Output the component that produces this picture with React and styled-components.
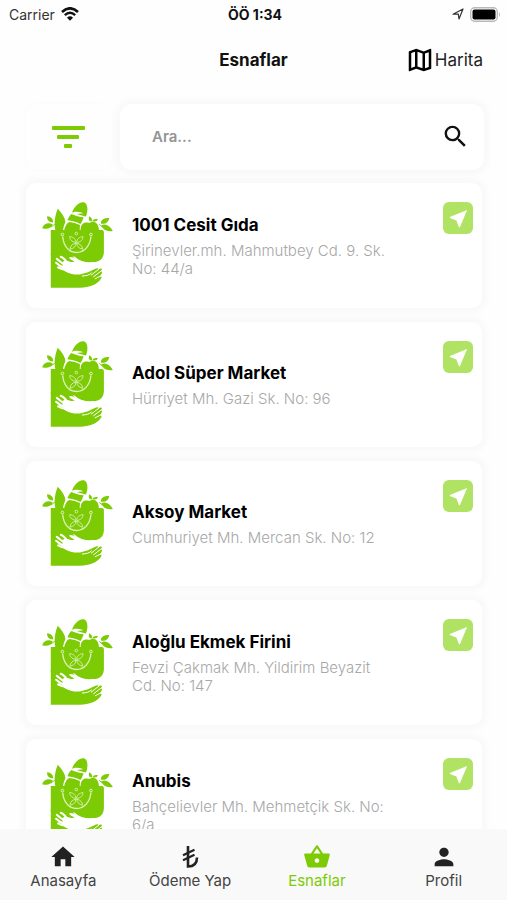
import { useState } from "react"
import styled, { createGlobalStyle } from "styled-components"
import { MdHome, MdPerson, MdShoppingBasket, MdSearch, MdNearMe, MdOutlineMap } from "react-icons/md"

const shops = [
    { name: "1001 Cesit Gıda", address: "Şirinevler.mh. Mahmutbey Cd. 9. Sk. No: 44/a" },
    { name: "Adol Süper Market", address: "Hürriyet Mh. Gazi Sk. No: 96" },
    { name: "Aksoy Market", address: "Cumhuriyet Mh. Mercan Sk. No: 12" },
    { name: "Aloğlu Ekmek Firini", address: "Fevzi Çakmak Mh. Yildirim Beyazit Cd. No: 147" },
    { name: "Anubis", address: "Bahçelievler Mh. Mehmetçik Sk. No: 6/a" },
]

const tabs = [
    { label: "Anasayfa", icon: <MdHome size={28} /> },
    { label: "Ödeme Yap", icon: <LiraIcon /> },
    { label: "Esnaflar", icon: <MdShoppingBasket size={28} /> },
    { label: "Profil", icon: <MdPerson size={30} /> },
]

export default function App() {
    const [search, setSearch] = useState("")
    const [active, setActive] = useState("Esnaflar")

    const filtered = shops.filter((shop) => shop.name.toLowerCase().includes(search.toLowerCase()))

    return (
        <>
            <GlobalStyle />
            <Screen>
                <StatusBar />
                <Header>
                    <h1>Esnaflar</h1>
                    <MapButton type="button">
                        <MdOutlineMap size={30} />
                        Harita
                    </MapButton>
                </Header>
                <SearchRow>
                    <FilterButton type="button" aria-label="Filtrele">
                        <FilterIcon />
                    </FilterButton>
                    <SearchBox>
                        <input
                            type="text"
                            aria-label="Ara"
                            placeholder="Ara..."
                            value={search}
                            onChange={(e) => setSearch(e.target.value)}
                        />
                        <MdSearch size={29} />
                    </SearchBox>
                </SearchRow>
                <List>
                    {filtered.map((shop) => (
                        <Card key={shop.name}>
                            <BagLogo />
                            <CardText>
                                <h2>{shop.name}</h2>
                                <p>{shop.address}</p>
                            </CardText>
                            <LocateButton type="button" aria-label={shop.name}>
                                <MdNearMe size={23} />
                            </LocateButton>
                        </Card>
                    ))}
                </List>
                <TabBar>
                    {tabs.map((tab) => (
                        <Tab
                            key={tab.label}
                            type="button"
                            $active={tab.label === active}
                            onClick={() => setActive(tab.label)}
                        >
                            {tab.icon}
                            <span>{tab.label}</span>
                        </Tab>
                    ))}
                </TabBar>
            </Screen>
        </>
    )
}

function StatusBar() {
    return (
        <Status>
            <StatusSide>
                Carrier
                <svg width="18" height="14" viewBox="0 0 18 14" fill="none" stroke="#111">
                    <path d="M1 5Q9-2.400 17 5" strokeWidth="2.600" />
                    <path d="M3.800 8.100Q9 3.300 14.200 8.100" strokeWidth="2.400" />
                    <path d="M9 13.800L6 10.700Q9 8 12 10.700Z" fill="#111" stroke="none" />
                </svg>
            </StatusSide>
            <strong>ÖÖ 1:34</strong>
            <StatusSide $end>
                <svg width="12" height="12" viewBox="0 0 12 12" fill="none" stroke="#333" strokeWidth="1.200" strokeLinejoin="round">
                    <path d="M1 6.200L11 1L7 11L6.300 6.200Z" />
                </svg>
                <svg width="31" height="15" viewBox="0 0 31 15">
                    <rect x="0.700" y="0.700" width="26.600" height="13.600" rx="4" fill="#fff" stroke="#b9b9b9" strokeWidth="1.400" />
                    <rect x="2.500" y="2.500" width="23" height="10" rx="2" fill="#000" />
                    <path d="M29 5Q31 7.500 29 10Z" fill="#b9b9b9" />
                </svg>
            </StatusSide>
        </Status>
    )
}

function FilterIcon() {
    return (
        <svg width="34" height="22" viewBox="0 0 34 22" fill="currentColor">
            <rect x="0" y="0" width="33" height="4" rx="1" />
            <rect x="5" y="9" width="22" height="4" rx="1" />
            <rect x="12" y="18" width="8" height="4" rx="1" />
        </svg>
    )
}

function LiraIcon() {
    return (
        <svg width="28" height="28" viewBox="0 0 28 28" fill="none" stroke="currentColor" strokeWidth="2.600">
            <path d="M12 3V23.500Q21 23.500 21 14.500" />
            <path d="M7 12.200L18.500 6.700M7 17.200L18.500 11.700" strokeWidth="2.200" />
        </svg>
    )
}

function BagLogo() {
    return (
        <Logo viewBox="36 36 216 262" aria-hidden="true">
            {/* bread, leaves and fruit */}
            <g fill="#7ccb05">
                <path d="M76 122C71 98 75 76 83 56C96 71 106 84 106 97C102 105 100 112 99 122Z" />
                <path d="M102 122C105 108 110 99 118 96C130 97 139 101 150 105L149 122Z" />
                <path d="M112 91C115 83 119 77 124 72C137 78 149 81 161 82C158 91 155 98 151 102C139 96 126 92 112 91Z" />
                <path d="M126 68C133 49 149 34 162 37C174 41 175 62 168 80L164 79L140 72L160 70C153 66 143 65 134 65Z" />
                <path d="M152 122C151 105 160 97 172 98C178 100 182 98 188 95C202 97 207 108 207 122Z" />
                <path d="M183 95C176 92 175 86 178 79C186 84 188 89 185 95ZM188 93C190 88 196 86 204 88C201 94 195 97 188 93Z" />
                <path d="M51 79C63 80 70 87 69 98C57 97 50 91 51 79ZM36 115C41 101 55 96 68 104C64 115 52 119 36 115Z" />
                <path d="M213 101C212 90 221 84 238 84C236 97 226 104 213 101ZM214 106C228 99 240 108 249 123C231 126 219 120 214 106Z" />
            </g>
            <path d="M62 112L74 103M218 112L208 103" stroke="#7ccb05" strokeWidth="3" />
            {/* bag */}
            <path d="M62 120H216Q222 120 222 127V187C221 207 210 216 190 217C169 219 150 215 133 200L62 196Z" fill="#7ccb05" />
            <path d="M62 190V294H150C178 294 204 285 214 266C216 262 214 259 210 261L216 250C217 246 214 244 210 247L216 240C215 235 211 235 206 239L205 236C200 234 192 239 182 244C172 249 160 252 150 254C123 257 104 246 92 230L140 212L120 190Z" fill="#7ccb05" />
            {/* hands */}
            <g fill="none" stroke="#fff" strokeWidth="6" strokeLinecap="round">
                <path d="M92 201C100 204 108 213 114 222M80 207C88 214 96 219 104 226M78 219C85 226 94 231 104 234M84 233C92 238 98 240 106 240" />
            </g>
            <path d="M98 216C106 210 116 214 124 217C131 219 137 219 139 217C131 213 121 211 117 204C121 198 131 203 140 209C163 222 190 224 217 213C206 231 186 237 170 243C154 250 140 253 126 251C110 249 102 244 98 236Z" fill="#fff" />
            <g fill="none" stroke="#fff" strokeWidth="3" strokeLinecap="round">
                <path d="M157 259C168 258 178 257 184 250M184 256L207 238M191 261L212 245M196 267L212 259" />
            </g>
            {/* handle and flower */}
            <g fill="none" stroke="#dff3bb" strokeWidth="4">
                <path d="M98 140C100 169 117 188 139 188C163 188 180 169 183 140" />
                <circle cx="97" cy="134" r="4" strokeWidth="3" />
                <circle cx="183" cy="134" r="4" strokeWidth="3" />
            </g>
            <g fill="none" stroke="#dff3bb" strokeWidth="2.500">
                <path d="M138 158C124 155 119 149 119 140C132 142 137 148 138 158ZM140 158C140 148 147 142 159 140C159 150 153 156 140 158Z" />
                <path d="M138 160C126 162 121 168 120 178C132 176 137 170 138 160ZM140 160C141 170 147 176 158 178C157 168 151 162 140 160Z" />
                <circle cx="139" cy="131" r="4" />
            </g>
        </Logo>
    )
}

const GlobalStyle = createGlobalStyle`
    * {
        box-sizing: border-box;
    }
    body {
        margin: 0;
        background: #fefefe;
        color: #111;
        font-family: Inter, "Liberation Sans", sans-serif;
    }
    h1, h2, p {
        margin: 0;
    }
    button {
        border: none;
        padding: 0;
        background: none;
        color: inherit;
        font-family: inherit;
        cursor: pointer;
    }
`

const Screen = styled.div`
    display: flex;
    flex-direction: column;
    height: 100vh;
    overflow: hidden;
`

const Status = styled.div`
    display: flex;
    align-items: center;
    height: 28px;
    padding: 0 6px 0 9px;
    font-size: 14px;

    strong {
        font-weight: 700;
    }
`

const StatusSide = styled.div`
    flex: 1;
    display: flex;
    align-items: center;
    justify-content: ${(props) => (props.$end ? "flex-end" : "flex-start")};
    gap: 6px;
    color: #333;
`

const Header = styled.header`
    display: grid;
    grid-template-columns: 1fr auto 1fr;
    align-items: center;
    height: 64px;
    padding: 0 24px;

    h1 {
        grid-column: 2;
        font-size: 17px;
        font-weight: 700;
    }
`

const MapButton = styled.button`
    display: flex;
    align-items: center;
    justify-self: end;
    font-size: 17px;
    color: #222;

    svg {
        color: #000;
    }
`

const SearchRow = styled.div`
    display: flex;
    gap: 8px;
    padding: 12px 23px 0 26px;
`

const FilterButton = styled.button`
    display: flex;
    align-items: center;
    justify-content: center;
    width: 86px;
    border-radius: 12px;
    box-shadow: 0 0 6px 2px rgba(0, 0, 0, 0.01);

    svg {
        color: #7ccb05;
    }
`

const SearchBox = styled.label`
    flex: 1;
    display: flex;
    align-items: center;
    height: 66px;
    padding: 0 14px 2px 32px;
    border-radius: 12px;
    background: #fff;
    box-shadow: 0 0 6px 5px rgba(0, 0, 0, 0.024);

    input {
        flex: 1;
        min-width: 0;
        border: none;
        outline: none;
        padding: 0;
        background: none;
        font-family: inherit;
        font-size: 15px;
        font-weight: 600;
    }

    input::placeholder {
        color: #949494;
        opacity: 1;
    }
`

const List = styled.main`
    flex: 1;
    min-height: 0;
    display: flex;
    flex-direction: column;
    gap: 14px;
    padding: 13px 25px 14px 26px;
    overflow-y: auto;
    scrollbar-width: none;
`

const Card = styled.article`
    flex: none;
    display: flex;
    align-items: center;
    min-height: 125px;
    padding: 19px 9px 19px 16px;
    border-radius: 10px;
    background: #fff;
    box-shadow: 0 0 6px 5px rgba(0, 0, 0, 0.024);
`

const Logo = styled.svg`
    flex: none;
    width: 72px;
    height: 87px;
`

const CardText = styled.div`
    flex: 1;
    padding: 0 50px 0 18px;

    h2 {
        margin-bottom: 6px;
        font-size: 17px;
        font-weight: 700;
        line-height: 22px;
        color: #000;
    }

    p {
        font-size: 15px;
        font-weight: 300;
        line-height: 18px;
        color: #a8a8a8;
    }
`

const LocateButton = styled.button`
    align-self: flex-start;
    display: flex;
    align-items: center;
    justify-content: center;
    width: 30px;
    height: 32px;
    border-radius: 6px;
    background: #b0e364;

    svg {
        color: #fff;
    }
`

const TabBar = styled.nav`
    flex: none;
    display: flex;
    height: 71px;
    background: #f9f9f9;
`

const Tab = styled.button`
    flex: 1;
    display: flex;
    flex-direction: column;
    align-items: center;
    padding-top: 14px;
    color: ${(props) => (props.$active ? "#7ccb05" : "#222")};

    svg {
        height: 28px;
    }

    span {
        font-size: 15px;
        line-height: 20px;
        color: ${(props) => (props.$active ? "#7ccb05" : "#444")};
    }
`
